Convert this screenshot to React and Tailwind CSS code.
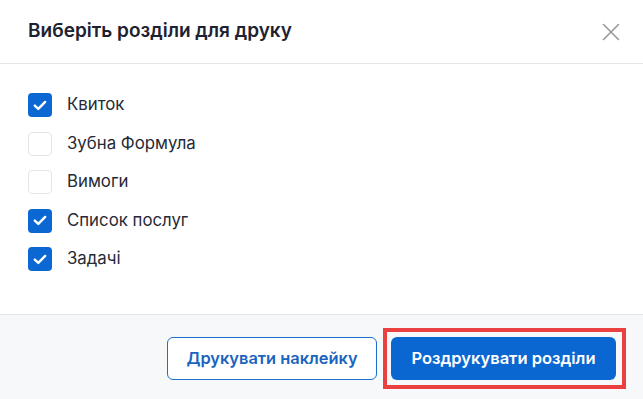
import React from "react";

function Check({ checked }) {
  if (checked) {
    return (
      <div className="w-6 h-6 rounded-[4px] bg-[#0b68d3] flex items-center justify-center shrink-0">
        <svg width="14" height="11" viewBox="0 0 14 11" fill="none">
          <path d="M1.8 5.6 L5.3 8.9 L12.2 1.9" stroke="white" strokeWidth="2.4" strokeLinecap="round" strokeLinejoin="round" />
        </svg>
      </div>
    );
  }
  return <div className="w-6 h-6 rounded-[4px] border border-[#e3e5ea] bg-white shrink-0" />;
}

const items = [
  ["Квиток", true],
  ["Зубна Формула", false],
  ["Вимоги", false],
  ["Список послуг", true],
  ["Задачі", true],
];

export default function App() {
  return (
    <div className="w-[643px] h-[399px] bg-white flex flex-col overflow-hidden" style={{ fontFamily: "Inter, 'Noto Sans', sans-serif" }}>
      <div className="h-16 shrink-0 flex items-center justify-between pl-7 pr-[23px] border-b border-[#e3e5e9]">
        <h1 className="text-[19px] font-semibold text-[#1e2230] tracking-[0px]">Виберіть розділи для друку</h1>
        <svg width="18" height="18" viewBox="0 0 18 18" fill="none">
          <path d="M1.5 1.5 L16.5 16.5 M16.5 1.5 L1.5 16.5" stroke="#9a9a9a" strokeWidth="1.6" strokeLinecap="round" />
        </svg>
      </div>
      <div className="flex-1 flex flex-col gap-[14.5px] pl-7 pt-[29px]">
        {items.map(([label, checked]) => (
          <div key={label} className="flex items-center gap-[15px] h-6">
            <Check checked={checked} />
            <span className="text-[16.8px] text-[#252a36]">{label}</span>
          </div>
        ))}
      </div>
      <div className="h-[85px] shrink-0 bg-[#f7f8fa] border-t border-[#e3e5e9] flex justify-end items-start pt-[22px] pr-[27px] gap-[14px]">
        <button className="w-[210px] h-[43px] rounded-[6px] border border-[#1a6fcf] bg-white text-[#1a64bf] text-[16.4px] font-semibold">
          Друкувати наклейку
        </button>
        <div className="relative">
          <button className="w-[225px] h-[43px] rounded-[6px] bg-[#0a67d2] text-white text-[16.5px] font-semibold">
            Роздрукувати розділи
          </button>
          <div className="absolute -left-[8px] -right-[10px] -top-[9px] -bottom-[9px] border-[4px] border-[#ea4040] pointer-events-none" />
        </div>
      </div>
    </div>
  );
}
